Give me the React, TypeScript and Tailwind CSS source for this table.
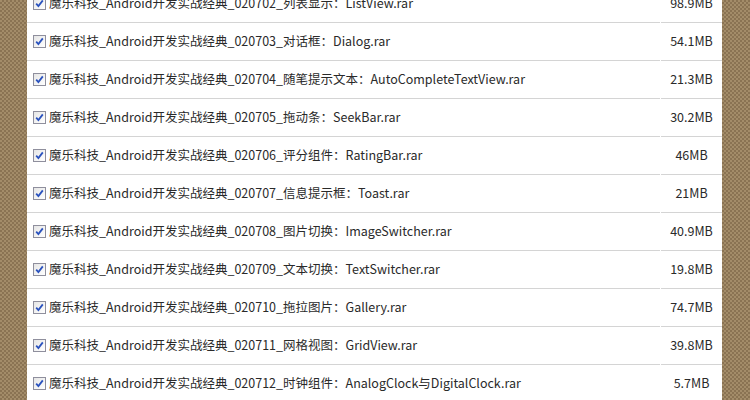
const ROWS: { name: string; size: string }[] = [
  { name: "魔乐科技_Android开发实战经典_020702_列表显示：ListView.rar", size: "98.9MB" },
  { name: "魔乐科技_Android开发实战经典_020703_对话框：Dialog.rar", size: "54.1MB" },
  { name: "魔乐科技_Android开发实战经典_020704_随笔提示文本：AutoCompleteTextView.rar", size: "21.3MB" },
  { name: "魔乐科技_Android开发实战经典_020705_拖动条：SeekBar.rar", size: "30.2MB" },
  { name: "魔乐科技_Android开发实战经典_020706_评分组件：RatingBar.rar", size: "46MB" },
  { name: "魔乐科技_Android开发实战经典_020707_信息提示框：Toast.rar", size: "21MB" },
  { name: "魔乐科技_Android开发实战经典_020708_图片切换：ImageSwitcher.rar", size: "40.9MB" },
  { name: "魔乐科技_Android开发实战经典_020709_文本切换：TextSwitcher.rar", size: "19.8MB" },
  { name: "魔乐科技_Android开发实战经典_020710_拖拉图片：Gallery.rar", size: "74.7MB" },
  { name: "魔乐科技_Android开发实战经典_020711_网格视图：GridView.rar", size: "39.8MB" },
  { name: "魔乐科技_Android开发实战经典_020712_时钟组件：AnalogClock与DigitalClock.rar", size: "5.7MB" },
];

const texture =
  "bg-[repeating-conic-gradient(#8a7353_0_25%,#a38c69_0_50%)] bg-[length:4px_4px]";

function Check() {
  return (
    <span className="flex h-[13px] w-[13px] shrink-0 items-center justify-center border border-[#8f8f9d] bg-gradient-to-br from-[#e6e6e6] to-[#ffffff]">
      <svg width="9" height="9" viewBox="0 0 9 9">
        <path d="M1.2 4.6 L3.4 7 L7.8 1.4" fill="none" stroke="#2a52be" strokeWidth="1.8" />
      </svg>
    </span>
  );
}

export default function App() {
  return (
    <div className="flex h-[400px] w-[750px] overflow-hidden bg-white font-['Noto_Sans_CJK_SC','Noto_Sans',sans-serif] text-[12.5px] text-[#2a2a2a]">
      <div className={`w-[27px] shrink-0 ${texture}`} />
      <div className="flex-1 overflow-hidden">
        <div className="-mt-[15px]">
          {ROWS.map((r) => (
            <div key={r.name} className="flex gap-[1px]">
              <div className="flex h-[38px] flex-1 items-center gap-[3px] border-b border-[#d4d4d4] pl-[6px]">
                <Check />
                <span className="whitespace-nowrap">{r.name}</span>
              </div>
              <div className="flex h-[38px] w-[61px] items-center justify-center border-b border-[#d4d4d4]">
                {r.size}
              </div>
            </div>
          ))}
        </div>
      </div>
      <div className={`w-[28px] shrink-0 ${texture}`} />
    </div>
  );
}
